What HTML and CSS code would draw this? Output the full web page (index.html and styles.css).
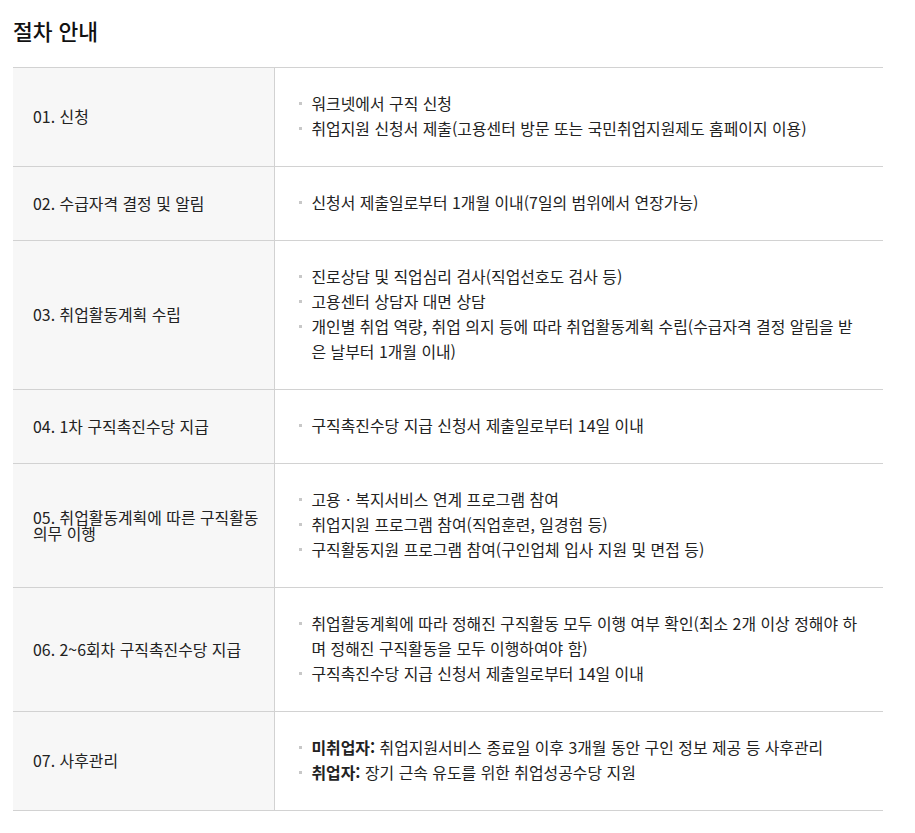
FILE: index.html
```html
<!DOCTYPE html>
<html lang="ko">
<head>
<meta charset="utf-8">
<link rel="stylesheet" href="styles.css">
</head>
<body>
<div class="page">
  <h2 class="title">절차 안내</h2>
  <table class="steps">
    <tr>
      <th>01. 신청</th>
      <td><ul><li>워크넷에서 구직 신청</li><li>취업지원 신청서 제출(고용센터 방문 또는 국민취업지원제도 홈페이지 이용)</li></ul></td>
    </tr>
    <tr>
      <th>02. 수급자격 결정 및 알림</th>
      <td><ul><li>신청서 제출일로부터 1개월 이내(7일의 범위에서 연장가능)</li></ul></td>
    </tr>
    <tr>
      <th>03. 취업활동계획 수립</th>
      <td><ul><li>진로상담 및 직업심리 검사(직업선호도 검사 등)</li><li>고용센터 상담자 대면 상담</li><li>개인별 취업 역량, 취업 의지 등에 따라 취업활동계획 수립(수급자격 결정 알림을 받은 날부터 1개월 이내)</li></ul></td>
    </tr>
    <tr>
      <th>04. 1차 구직촉진수당 지급</th>
      <td><ul><li>구직촉진수당 지급 신청서 제출일로부터 14일 이내</li></ul></td>
    </tr>
    <tr>
      <th>05. 취업활동계획에 따른 구직활동 의무 이행</th>
      <td><ul><li>고용ㆍ복지서비스 연계 프로그램 참여</li><li>취업지원 프로그램 참여(직업훈련, 일경험 등)</li><li>구직활동지원 프로그램 참여(구인업체 입사 지원 및 면접 등)</li></ul></td>
    </tr>
    <tr>
      <th>06. 2~6회차 구직촉진수당 지급</th>
      <td><ul><li>취업활동계획에 따라 정해진 구직활동 모두 이행 여부 확인(최소 2개 이상 정해야 하며 정해진 구직활동을 모두 이행하여야 함)</li><li>구직촉진수당 지급 신청서 제출일로부터 14일 이내</li></ul></td>
    </tr>
    <tr>
      <th>07. 사후관리</th>
      <td><ul><li><b>미취업자:</b> 취업지원서비스 종료일 이후 3개월 동안 구인 정보 제공 등 사후관리</li><li><b>취업자:</b> 장기 근속 유도를 위한 취업성공수당 지원</li></ul></td>
    </tr>
  </table>
</div>
</body>
</html>
```
FILE: styles.css
```css
* { box-sizing: border-box; }
body {
  margin: 0;
  background: #fff;
  font-family: "Noto Sans CJK KR", "Noto Sans", sans-serif;
  color: #222;
}
.page {
  padding: 16px 32px 20px 13px;
}
.title {
  margin: 0 0 22px;
  font-size: 21.5px;
  font-weight: 500;
  line-height: 29px;
  color: #111;
}
.steps {
  width: 870px;
  border-collapse: collapse;
  border-top: 1px solid #d2d2d2;
}
.steps tr {
  border-bottom: 1px solid #d2d2d2;
}
.steps th {
  width: 261px;
  background: #f7f7f7;
  border-right: 1px solid #d2d2d2;
  text-align: left;
  font-weight: 400;
  font-size: 15.9px;
  line-height: 16px;
  padding: 0 8px 0 20px;
  vertical-align: middle;
  word-break: keep-all;
}
.steps td {
  padding: 23px 24px 25px 24px;
  font-size: 15.9px;
  line-height: 25px;
  vertical-align: middle;
}
.steps ul {
  margin: 0;
  padding: 0;
  list-style: none;
}
.steps li {
  position: relative;
  padding-left: 13px;
}
.steps li::before {
  content: "";
  position: absolute;
  left: 0;
  top: 11px;
  width: 3px;
  height: 3px;
  background: #c8c8c8;
}
.steps b { font-weight: 700; }
```
